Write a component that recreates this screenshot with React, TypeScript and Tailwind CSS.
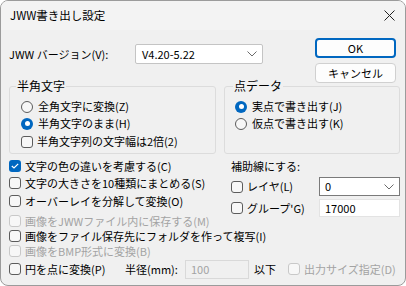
import React from 'react';

const font = { fontFamily: '"Noto Sans CJK JP", "Noto Sans", sans-serif' };

function Chevron() {
  return (
    <svg width="10" height="6" viewBox="0 0 10 6" className="shrink-0">
      <path d="M0.5 0.5 L5 5 L9.5 0.5" fill="none" stroke="#6b6b6b" strokeWidth="1" />
    </svg>
  );
}

function Radio({ checked, label }: { checked?: boolean; label: string }) {
  return (
    <div className="flex items-center h-[17px] gap-[5px] whitespace-nowrap">
      {checked ? (
        <span className="w-[12px] h-[12px] rounded-full bg-[#0067c0] flex items-center justify-center">
          <span className="w-[5px] h-[5px] rounded-full bg-white" />
        </span>
      ) : (
        <span className="w-[12px] h-[12px] rounded-full border border-[#5c5c5c] bg-[#f7f7f7]" />
      )}
      <span>{label}</span>
    </div>
  );
}

function Check({ checked, disabled, label }: { checked?: boolean; disabled?: boolean; label: string }) {
  return (
    <div className={`flex items-center gap-[4px] whitespace-nowrap ${disabled ? 'text-[#a3a3a3]' : ''}`}>
      {checked ? (
        <span className="w-[12px] h-[12px] rounded-[3px] bg-[#0067c0] flex items-center justify-center">
          <svg width="8" height="6" viewBox="0 0 8 6">
            <path d="M0.8 3 L3 5 L7.2 0.8" fill="none" stroke="white" strokeWidth="1.2" />
          </svg>
        </span>
      ) : (
        <span
          className={`w-[12px] h-[12px] rounded-[3px] border bg-[#f7f7f7] ${
            disabled ? 'border-[#c8c8c8]' : 'border-[#5c5c5c]'
          }`}
        />
      )}
      <span>{label}</span>
    </div>
  );
}

export default function App() {
  return (
    <div className="w-[406px] h-[286px] bg-white text-[11px] text-black leading-none" style={font}>
      <div className="w-full h-full rounded-[8px] border border-[#9b9b9b] overflow-hidden flex flex-col bg-[#f0f0f0]">
        {/* title bar */}
        <div className="h-[29px] shrink-0 flex items-center justify-between pl-[9px] pr-[10px] bg-[#f3f3f3]">
          <span className="text-[11.5px]">JWW書き出し設定</span>
          <svg width="11" height="11" viewBox="0 0 11 11">
            <path d="M0.5 0.5 L10.5 10.5 M10.5 0.5 L0.5 10.5" stroke="#222" strokeWidth="1" />
          </svg>
        </div>

        {/* body */}
        <div className="flex-1 flex flex-col">
          {/* version row + buttons */}
          <div className="flex pt-[8px] pl-[8px] pr-[9px]">
            <div className="flex items-center h-[20px] mt-[6px]">
              <span className="w-[126px]">JWW バージョン(V):</span>
              <div className="w-[128px] h-[20px] bg-white border border-[#c4c4c4] rounded-[2px] flex items-center justify-between pl-[6px] pr-[5px]">
                <span>V4.20-5.22</span>
                <Chevron />
              </div>
            </div>
            <div className="ml-auto flex flex-col gap-[5px]">
              <div className="w-[81px] h-[20px] rounded-[4px] border-2 border-[#0067c0] bg-[#fdfdfd] flex items-center justify-center">
                OK
              </div>
              <div className="w-[81px] h-[20px] rounded-[4px] border border-[#d0d0d0] bg-[#fdfdfd] flex items-center justify-center">
                キャンセル
              </div>
            </div>
          </div>

          {/* groups */}
          <div className="flex gap-[8px] pl-[8px] mt-[3px]">
            <div className="relative w-[207px] h-[68px] border border-[#dcdcdc] rounded-[3px] pl-[11px] pt-[11px]">
              <span className="absolute left-[6px] top-[-7px] px-[1px] bg-[#f0f0f0] text-[12px]">半角文字</span>
              <Radio label="全角文字に変換(Z)" />
              <Radio checked label="半角文字のまま(H)" />
              <div className="h-[17px] flex items-center mt-[1px]">
                <Check label="半角文字列の文字幅は2倍(2)" />
              </div>
            </div>
            <div className="relative w-[176px] h-[68px] border border-[#dcdcdc] rounded-[3px] pl-[10px] pt-[11px]">
              <span className="absolute left-[8px] top-[-7px] px-[1px] bg-[#f0f0f0] text-[12px]">点データ</span>
              <Radio checked label="実点で書き出す(J)" />
              <Radio label="仮点で書き出す(K)" />
            </div>
          </div>

          {/* options */}
          <div className="flex pl-[8px] mt-[5px]">
            <div className="w-[222px] flex flex-col">
              <div className="h-[14px] flex items-center">
                <Check checked label="文字の色の違いを考慮する(C)" />
              </div>
              <div className="h-[14px] flex items-center mt-[3px]">
                <Check label="文字の大きさを10種類にまとめる(S)" />
              </div>
              <div className="h-[14px] flex items-center mt-[4px]">
                <Check label="オーバーレイを分解して変換(O)" />
              </div>
              <div className="h-[14px] flex items-center mt-[6px]">
                <Check disabled label="画像をJWWファイル内に保存する(M)" />
              </div>
              <div className="h-[14px] flex items-center mt-[1px]">
                <Check label="画像をファイル保存先にフォルダを作って複写(I)" />
              </div>
              <div className="h-[14px] flex items-center mt-[1px]">
                <Check disabled label="画像をBMP形式に変換(B)" />
              </div>
            </div>
            <div className="flex flex-col">
              <div className="h-[14px] flex items-center">補助線にする:</div>
              <div className="h-[19px] flex items-center mt-[4px]">
                <div className="w-[88px]">
                  <Check label="レイヤ(L)" />
                </div>
                <div className="w-[81px] h-[19px] bg-white border border-[#7a7a7a] flex items-center justify-between pl-[5px] pr-[5px]">
                  <span>0</span>
                  <Chevron />
                </div>
              </div>
              <div className="h-[18px] flex items-center mt-[3px]">
                <div className="w-[88px]">
                  <Check label="グループ'G)" />
                </div>
                <div className="w-[81px] h-[18px] bg-white border border-[#e3e3e3] flex items-center pl-[5px]">
                  17000
                </div>
              </div>
            </div>
          </div>

          {/* last row */}
          <div className="flex items-center h-[20px] pl-[8px] mt-[1px] whitespace-nowrap">
            <div className="w-[116px]">
              <Check label="円を点に変換(P)" />
            </div>
            <span className="w-[60px]">半径(mm):</span>
            <div className="w-[64px] h-[19px] border border-[#d9d9d9] bg-[#f0f0f0] text-[#a3a3a3] flex items-center pl-[5px]">
              100
            </div>
            <span className="ml-[5px] w-[34px]">以下</span>
            <Check disabled label="出力サイズ指定(D)" />
          </div>
        </div>
      </div>
    </div>
  );
}
